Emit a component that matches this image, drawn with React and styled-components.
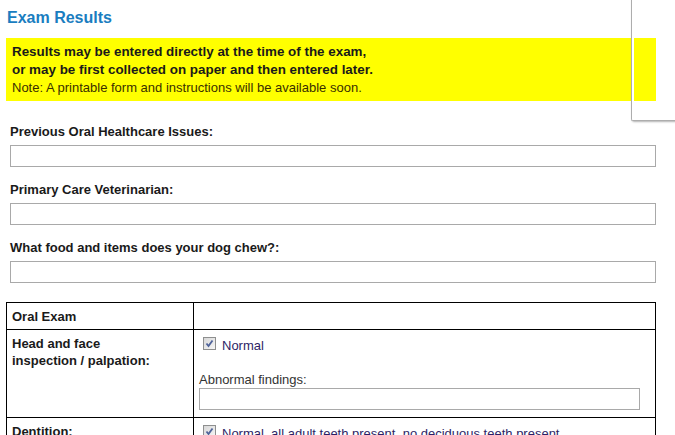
import styled, { createGlobalStyle } from "styled-components";

const GlobalStyle = createGlobalStyle`
  html, body {
    margin: 0;
    padding: 0;
    overflow: hidden;
    background: #fff;
  }
  body {
    font-family: "Liberation Sans", Arial, sans-serif;
    color: #222;
  }
`;

const Check = () => (
  <Box>
    <svg width="11" height="11" viewBox="0 0 11 11">
      <path d="M2.5 5.5 L4.5 8 L8.5 2.5" fill="none" stroke="#4f639a" strokeWidth="1.8" />
    </svg>
  </Box>
);

const App = () => {
  return (
    <>
      <GlobalStyle />
      <Page>
        <Title>Exam Results</Title>
        <Notice>
          <Strong>Results may be entered directly at the time of the exam,</Strong>
          <Strong>or may be first collected on paper and then entered later.</Strong>
          <Note>Note: A printable form and instructions will be available soon.</Note>
        </Notice>

        <Fields>
          <Field>
            <Label>Previous Oral Healthcare Issues:</Label>
            <TextInput />
          </Field>
          <Field>
            <Label>Primary Care Veterinarian:</Label>
            <TextInput />
          </Field>
          <Field>
            <Label>What food and items does your dog chew?:</Label>
            <TextInput />
          </Field>
        </Fields>

        <Table>
          <colgroup>
            <col style={{ width: 187 }} />
            <col />
          </colgroup>
          <tbody>
            <tr>
              <HeadCell>Oral Exam</HeadCell>
              <Cell />
            </tr>
            <tr>
              <HeadCell>Head and face<br />inspection / palpation:</HeadCell>
              <Cell>
                <CheckRow>
                  <Check />
                  <CheckText>Normal</CheckText>
                </CheckRow>
                <Findings>Abnormal findings:</Findings>
                <FindingsInput />
              </Cell>
            </tr>
            <tr>
              <HeadCell>Dentition:</HeadCell>
              <Cell>
                <CheckRow>
                  <Check />
                  <CheckText>Normal, all adult teeth present, no deciduous teeth present</CheckText>
                </CheckRow>
                <Findings>Abnormal findings:</Findings>
                <FindingsInput />
              </Cell>
            </tr>
          </tbody>
        </Table>

        <Flyout />
      </Page>
    </>
  );
};

const Page = styled.div`
  position: relative;
  width: 650px;
  margin-left: 6px;
  padding-top: 9px;
`;

const Title = styled.h2`
  margin: 0 0 11px 1px;
  font-size: 16px;
  line-height: 18px;
  font-weight: bold;
  color: #1a7dc0;
`;

const Notice = styled.div`
  background: #ffff00;
  padding: 5px 6px 4px;
  display: flex;
  flex-direction: column;
`;

const Strong = styled.div`
  font-size: 13.4px;
  line-height: 18px;
  font-weight: bold;
  color: #1a1a1a;
`;

const Note = styled.div`
  font-size: 13px;
  line-height: 18px;
  color: #3a3000;
`;

const Fields = styled.div`
  display: flex;
  flex-direction: column;
  gap: 15px;
  padding: 23px 0 0 4px;
  margin-bottom: 19px;
`;

const Field = styled.div`
  display: flex;
  flex-direction: column;
  gap: 5px;
`;

const Label = styled.label`
  font-size: 13px;
  line-height: 16px;
  font-weight: bold;
  color: #1a1a1a;
`;

const TextInput = styled.input.attrs({ type: "text" })`
  box-sizing: border-box;
  width: 646px;
  height: 22px;
  margin: 0;
  border: 1px solid #a9a9a9;
  background: #fff;
  font: 12px "Liberation Sans", Arial, sans-serif;
`;

const Table = styled.table`
  width: 650px;
  border-collapse: collapse;
  table-layout: fixed;
`;

const HeadCell = styled.td`
  border: 1px solid #000;
  padding: 5px 5px 4px;
  vertical-align: top;
  font-size: 13px;
  line-height: 17px;
  font-weight: bold;
  color: #1a1a1a;
`;

const Cell = styled.td`
  border: 1px solid #000;
  padding: 4px 15px 7px 5px;
  vertical-align: top;
`;

const CheckRow = styled.div`
  display: flex;
  align-items: flex-start;
  gap: 6px;
  margin-left: 4px;
  height: 20px;
`;

const Box = styled.span`
  box-sizing: border-box;
  flex: none;
  width: 13px;
  height: 13px;
  margin-top: 3px;
  border: 1px solid #8e8f8f;
  background: linear-gradient(135deg, #d8d8d8, #f6f6f6);
  display: flex;
  align-items: center;
  justify-content: center;
`;

const CheckText = styled.span`
  margin-top: 4px;
  font-size: 13px;
  line-height: 16px;
  color: #2e1f66;
  white-space: nowrap;
`;

const Findings = styled.div`
  margin-top: 18px;
  font-size: 13px;
  line-height: 15px;
  color: #333;
`;

const FindingsInput = styled.input.attrs({ type: "text" })`
  box-sizing: border-box;
  display: block;
  width: 100%;
  height: 22px;
  margin: 1px 0 0;
  border: 1px solid #a9a9a9;
  background: #fff;
`;

const Flyout = styled.div`
  position: absolute;
  left: 625px;
  top: -10px;
  width: 120px;
  height: 130px;
  border-left: 1px solid #adadad;
  border-bottom: 1px solid #adadad;
  border-bottom-left-radius: 2px;
  box-shadow: 1px 1px 2px rgba(0, 0, 0, 0.3), inset 2px 0 0 #fff;
`;

export default App;
